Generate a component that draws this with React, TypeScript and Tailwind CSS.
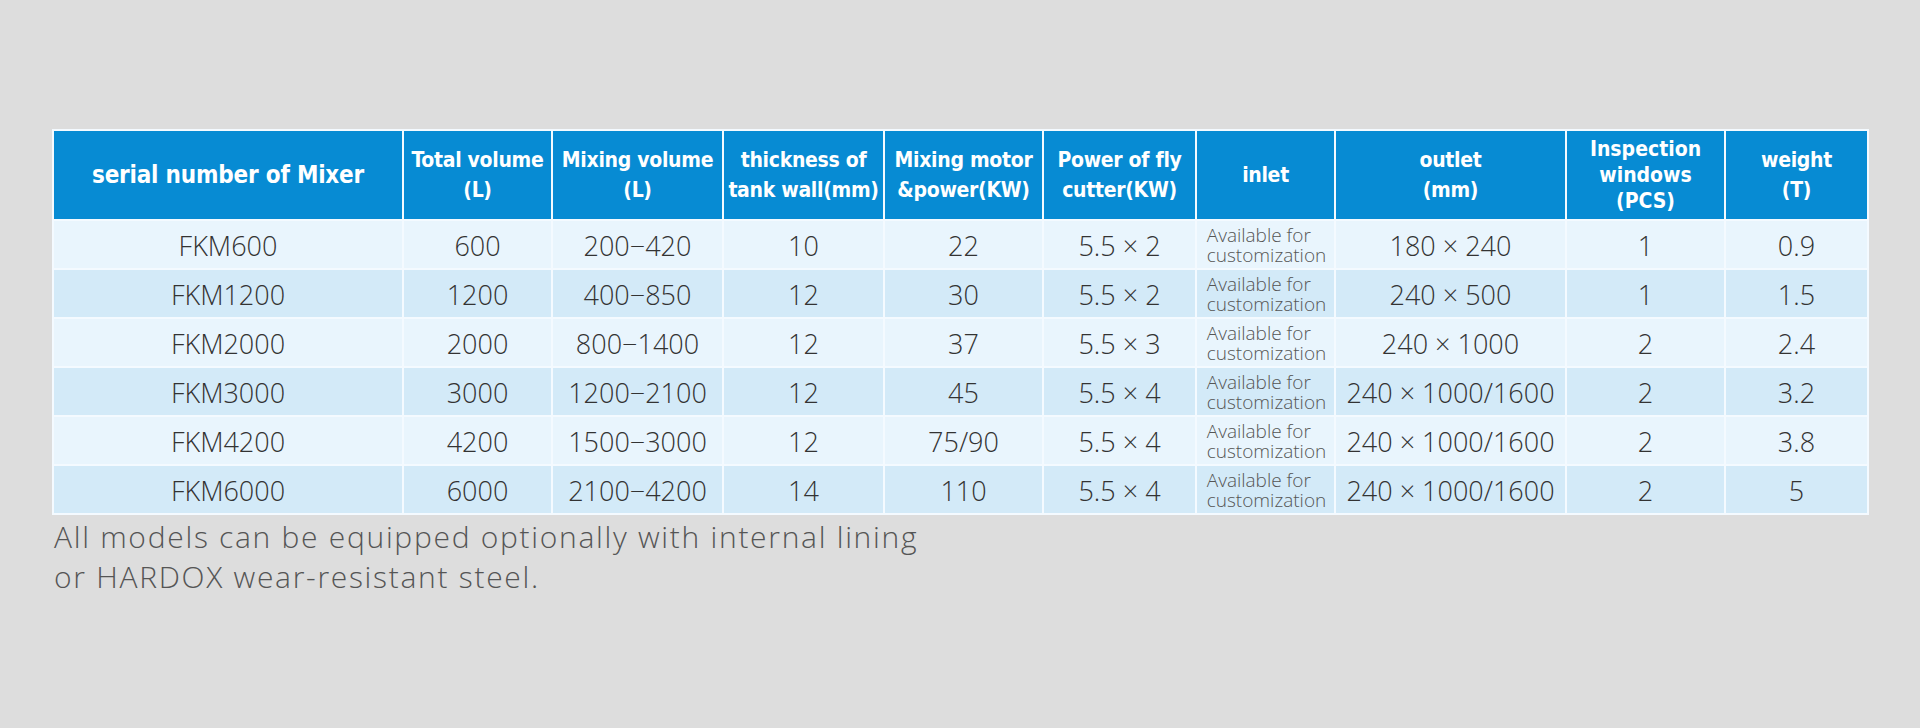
import React from 'react';

const headers: string[][] = [
  ['serial number of Mixer'],
  ['Total volume', '(L)'],
  ['Mixing volume', '(L)'],
  ['thickness of', 'tank wall(mm)'],
  ['Mixing motor', '&power(KW)'],
  ['Power of fly', 'cutter(KW)'],
  ['inlet'],
  ['outlet', '(mm)'],
  ['Inspection', 'windows', '(PCS)'],
  ['weight', '(T)'],
];

const rows = [
  ['FKM600', '600', '200−420', '10', '22', '5.5 × 2', '180 × 240', '1', '0.9'],
  ['FKM1200', '1200', '400−850', '12', '30', '5.5 × 2', '240 × 500', '1', '1.5'],
  ['FKM2000', '2000', '800−1400', '12', '37', '5.5 × 3', '240 × 1000', '2', '2.4'],
  ['FKM3000', '3000', '1200−2100', '12', '45', '5.5 × 4', '240 × 1000/1600', '2', '3.2'],
  ['FKM4200', '4200', '1500−3000', '12', '75/90', '5.5 × 4', '240 × 1000/1600', '2', '3.8'],
  ['FKM6000', '6000', '2100−4200', '14', '110', '5.5 × 4', '240 × 1000/1600', '2', '5'],
];

const headFont = { fontFamily: '"DejaVu Sans Condensed", "DejaVu Sans", sans-serif' };
const bodyFont = { fontFamily: '"Open Sans", "Noto Sans", sans-serif' };

const App: React.FC = () => {
  return (
    <div className="w-[1920px] h-[728px] bg-[#dddddd] pt-[129px] pl-[52px]">
      {/* Spec table */}
      <div
        className="grid w-fit bg-[#f4faff] p-[2px] gap-[2px] grid-cols-[348px_147px_169px_159px_157px_151px_137px_229px_157px_141px] grid-rows-[88px_repeat(6,47px)]"
      >
        {headers.map((lines, i) => (
          <div
            key={i}
            style={headFont}
            className={`bg-[#078bd3] text-white font-bold flex flex-col items-center justify-center text-center ${
              lines.length === 3
                ? 'text-[21px] leading-[26px]'
                : i === 0
                  ? 'text-[24px] leading-[30px] tracking-[-0.2px]'
                  : 'text-[21px] leading-[30px] tracking-[-0.3px]'
            }`}
          >
            {lines.map((l, j) => (
              <span key={j} className="whitespace-nowrap">{l}</span>
            ))}
          </div>
        ))}

        {rows.map((r, ri) => {
          const bg = ri % 2 === 0 ? 'bg-[#e9f5fd]' : 'bg-[#d3eaf8]';
          const cells = [...r.slice(0, 6), null, ...r.slice(6)];
          return cells.map((c, ci) =>
            c === null ? (
              <div key={`${ri}-${ci}`} className={`${bg} flex items-center justify-center`}>
                <div style={bodyFont} className="text-[19px] leading-[20px] font-light text-[#555] text-left pl-[2px]">
                  Available for
                  <br />
                  customization
                </div>
              </div>
            ) : (
              <div
                key={`${ri}-${ci}`}
                style={bodyFont}
                className={`${bg} flex items-center justify-center text-[27px] font-light text-[#333] whitespace-nowrap pt-[3px]`}
              >
                {c}
              </div>
            )
          );
        })}
      </div>

      <p style={bodyFont} className="mt-[2px] ml-[2px] text-[30px] leading-[40px] font-light text-[#555] tracking-[1.7px]">
        All models can be equipped optionally with internal lining
        <br />
        or HARDOX wear-resistant steel.
      </p>
    </div>
  );
};

export default App;
